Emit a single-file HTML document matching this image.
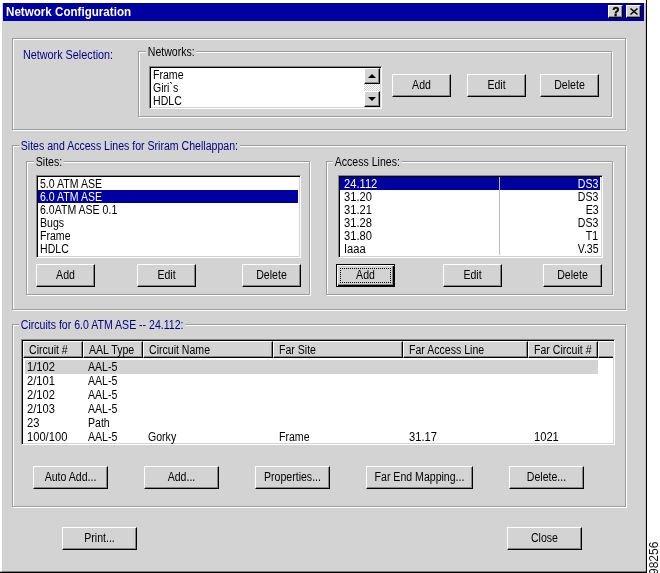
<!DOCTYPE html>
<html><head><meta charset="utf-8"><title>Network Configuration</title>
<style>
html,body{margin:0;padding:0;background:#fff;}
body{width:660px;height:573px;position:relative;overflow:hidden;font-family:"Liberation Sans",sans-serif;font-size:12px;color:#000;}
#win{position:absolute;left:0;top:0;width:647px;height:573px;background:#d3d3d3;box-sizing:border-box;
 box-shadow:inset -1px -1.3px 0 #000, inset 2px 3px 0 #fff, inset -1.4px -1.7px 0 #9a9a9a;}
#win{will-change:transform;}
#win div{position:absolute;box-sizing:border-box;}
#title{left:3px;top:3px;width:641px;height:17.5px;background:#0000a0;}
#ttext{position:absolute;left:3px;top:2px;color:#fff;font-weight:bold;font-size:12px;line-height:14px;white-space:nowrap;transform:scaleX(.967);transform-origin:0 0;}
.cbtn{top:2px;width:15px;height:13px;background:#d3d3d3;border:1px solid;border-color:#fff #000 #000 #fff;box-shadow:inset -1px -1px 0 #888;}
.cbtn svg{position:absolute;left:1px;top:0px}
.grp{border:1px solid #9c9c9c;box-shadow:1px 1px 0 #fff, inset 1px 1px 0 #fff;}
.glabel{background:#d3d3d3;padding:0 2px;line-height:14px;white-space:nowrap;transform:scaleX(0.88);transform-origin:0 0;}
.blue{color:#000086;}
.t{line-height:14px;white-space:nowrap;transform:scaleX(0.88);transform-origin:0 0;}
.btn{background:#d3d3d3;border:1px solid;border-color:#fff #000 #000 #fff;box-shadow:inset -1px -1px 0 #858585;text-align:center;}
.btn .bl{position:absolute;left:0;right:0;top:3px;line-height:14px;white-space:nowrap;transform:scaleX(0.88);}
.btn.def{border-color:#000;box-shadow:inset 1px 1px 0 #fff, inset -1px -1px 0 #000, inset -2px -2px 0 #858585;}
.btn.def .focus{position:absolute;left:3px;top:3px;right:3px;bottom:3px;border:1px dotted #000;}
.sunk{background:#fff;border:1px solid;border-color:#858585 #fff #fff #858585;box-shadow:inset 1px 1px 0 #000, inset -1px -1px 0 #d3d3d3;margin:0;}
.sunk>div{margin:-1px 0 0 -1px}
.li{height:13px;line-height:15px;padding-left:2px;white-space:nowrap;left:2px;right:2px}
.li span{display:inline-block;transform:scaleX(0.88);transform-origin:0 0;}
.li.sel{background:#0000a0;color:#fff;}
.li .r{position:absolute;right:1.5px;top:0;transform-origin:100% 0}
.vline{top:2px;width:1px;height:78px;background:#bdbdbd;}
.sb{background-color:#fff;background-image:conic-gradient(#fff 25%, #d3d3d3 0 50%, #fff 0 75%, #d3d3d3 0);background-size:2px 2px;}
.sbb{left:0;width:16px;height:16px;background:#d3d3d3;border:1px solid;border-color:#fff #000 #000 #fff;box-shadow:inset -1px -1px 0 #858585;}
.sbb svg{position:absolute;left:1px;top:1px}
.hd{top:2px;height:17px;background:#d3d3d3;border:1px solid;border-color:#fff #000 #000 #fff;box-shadow:inset -1px -1px 0 #858585;}
.hd span{position:absolute;left:5px;top:1px;line-height:14px;white-space:nowrap;transform:scaleX(0.88);transform-origin:0 0;}
.hd.last{border-right:none;box-shadow:inset 0 -1px 0 #858585;}
.rowsel{background:#d3d3d3;}
#win .n{transform:scaleX(.93);}
#win .ns{transform:scaleX(.9);}
#fig{will-change:transform;position:absolute;left:648px;top:574.8px;transform-origin:0 0;transform:rotate(-90deg);font-size:12px;line-height:12px;white-space:nowrap;color:#111;}
</style></head>
<body>
<div id="win">
<div id="title"><span id="ttext">Network Configuration</span><div class="cbtn" style="left:605px"><svg width="12" height="11" viewBox="0 0 12 11"><text x="6" y="10" text-anchor="middle" font-family="Liberation Sans, sans-serif" font-weight="bold" font-size="12" fill="#000" stroke="#000" stroke-width=".4">?</text></svg></div><div class="cbtn" style="left:623px"><svg width="12" height="11" viewBox="0 0 12 11"><path d="M2.5 2.5 L9.5 8.5 M9.5 2.5 L2.5 8.5" stroke="#000" stroke-width="1.6" fill="none"/></svg></div></div>
<div class="grp" style="left:12px;top:38px;width:614px;height:92px"></div>
<div class="t blue ns" style="left:23px;top:48px">Network Selection:</div>
<div class="grp" style="left:138px;top:51px;width:474px;height:66px"></div>
<div class="glabel" style="left:146px;top:45px">Networks:</div>
<div class="sunk" style="left:149px;top:66px;width:233px;height:43px"><div class="li" style="top:2px"><span>Frame</span></div><div class="li" style="top:15px"><span>Giri`s</span></div><div class="li" style="top:28px"><span>HDLC</span></div><div class="sb" style="left:215px;top:2px;width:16px;height:39px"><div class="sbb" style="top:0"><svg width="12" height="11" viewBox="0 0 12 11"><path d="M2 8 L10 8 L6 4 Z" fill="#000"/></svg></div><div class="sbb" style="bottom:0"><svg width="12" height="11" viewBox="0 0 12 11"><path d="M2 4 L10 4 L6 8 Z" fill="#000"/></svg></div></div></div>
<div class="btn" style="left:392px;top:74px;width:59px;height:23px;"><span class="bl">Add</span></div>
<div class="btn" style="left:467px;top:74px;width:59px;height:23px;"><span class="bl">Edit</span></div>
<div class="btn" style="left:540px;top:74px;width:59px;height:23px;"><span class="bl">Delete</span></div>
<div class="grp" style="left:12px;top:145px;width:614px;height:165px"></div>
<div class="glabel blue" style="left:19px;top:139px">Sites and Access Lines for Sriram Chellappan:</div>
<div class="grp" style="left:26px;top:161px;width:284px;height:134px"></div>
<div class="glabel" style="left:34px;top:155px">Sites:</div>
<div class="sunk" style="left:36px;top:175px;width:265px;height:83px">
<div class="li" style="top:2px;left:2px;right:2px"><span>5.0 ATM ASE</span></div>
<div class="li sel" style="top:15px;left:2px;right:2px"><span>6.0 ATM ASE</span></div>
<div class="li" style="top:28px;left:2px;right:2px"><span>6.0ATM ASE 0.1</span></div>
<div class="li" style="top:41px;left:2px;right:2px"><span>Bugs</span></div>
<div class="li" style="top:54px;left:2px;right:2px"><span>Frame</span></div>
<div class="li" style="top:67px;left:2px;right:2px"><span>HDLC</span></div>
</div>
<div class="btn" style="left:36px;top:264px;width:59px;height:23px;"><span class="bl">Add</span></div>
<div class="btn" style="left:137px;top:264px;width:59px;height:23px;"><span class="bl">Edit</span></div>
<div class="btn" style="left:242px;top:264px;width:59px;height:23px;"><span class="bl">Delete</span></div>
<div class="grp" style="left:326px;top:161px;width:287px;height:134px"></div>
<div class="glabel" style="left:333px;top:155px">Access Lines:</div>
<div class="sunk" style="left:338px;top:175px;width:265px;height:83px">
<div class="li sel" style="top:2px;left:2px;right:2px;padding-left:4px"><span class="n">24.112</span><span class="r">DS3</span></div>
<div class="li" style="top:15px;left:2px;right:2px;padding-left:4px"><span class="n">31.20</span><span class="r">DS3</span></div>
<div class="li" style="top:28px;left:2px;right:2px;padding-left:4px"><span class="n">31.21</span><span class="r">E3</span></div>
<div class="li" style="top:41px;left:2px;right:2px;padding-left:4px"><span class="n">31.28</span><span class="r">DS3</span></div>
<div class="li" style="top:54px;left:2px;right:2px;padding-left:4px"><span class="n">31.80</span><span class="r">T1</span></div>
<div class="li" style="top:67px;left:2px;right:2px;padding-left:4px"><span class="n">Iaaa</span><span class="r">V.35</span></div>
<div class="vline" style="left:161px"></div>
</div>
<div class="btn def" style="left:336px;top:264px;width:59px;height:23px;"><span class="bl">Add</span><i class="focus"></i></div>
<div class="btn" style="left:443px;top:264px;width:59px;height:23px;"><span class="bl">Edit</span></div>
<div class="btn" style="left:543px;top:264px;width:59px;height:23px;"><span class="bl">Delete</span></div>
<div class="grp" style="left:12px;top:324px;width:614px;height:183px"></div>
<div class="glabel blue" style="left:19px;top:318px">Circuits for 6.0 ATM ASE -- 24.112:</div>
<div class="sunk" style="left:21px;top:339px;width:594px;height:106px">
<div class="hd" style="left:2px;width:60px"><span>Circuit #</span></div>
<div class="hd" style="left:62px;width:60px"><span>AAL Type</span></div>
<div class="hd" style="left:122px;width:130px"><span>Circuit Name</span></div>
<div class="hd" style="left:252px;width:130px"><span>Far Site</span></div>
<div class="hd" style="left:382px;width:125px"><span>Far Access Line</span></div>
<div class="hd" style="left:507px;width:70px"><span>Far Circuit #</span></div>
<div class="hd last" style="left:577px;width:15px"><span></span></div>
<div class="rowsel" style="left:4px;top:21px;width:573px;height:14px"></div>
<div class="t n" style="left:6px;top:21px">1/102</div>
<div class="t" style="left:67px;top:21px">AAL-5</div>
<div class="t n" style="left:6px;top:35px">2/101</div>
<div class="t" style="left:67px;top:35px">AAL-5</div>
<div class="t n" style="left:6px;top:49px">2/102</div>
<div class="t" style="left:67px;top:49px">AAL-5</div>
<div class="t n" style="left:6px;top:63px">2/103</div>
<div class="t" style="left:67px;top:63px">AAL-5</div>
<div class="t n" style="left:6px;top:77px">23</div>
<div class="t" style="left:67px;top:77px">Path</div>
<div class="t n" style="left:6px;top:91px">100/100</div>
<div class="t" style="left:67px;top:91px">AAL-5</div>
<div class="t" style="left:127px;top:91px">Gorky</div>
<div class="t" style="left:258px;top:91px">Frame</div>
<div class="t n" style="left:388px;top:91px">31.17</div>
<div class="t n" style="left:513px;top:91px">1021</div>
</div>
<div class="btn" style="left:33px;top:466px;width:75px;height:23px;"><span class="bl">Auto Add...</span></div>
<div class="btn" style="left:144px;top:466px;width:75px;height:23px;"><span class="bl">Add...</span></div>
<div class="btn" style="left:255px;top:466px;width:75px;height:23px;"><span class="bl">Properties...</span></div>
<div class="btn" style="left:366px;top:466px;width:107px;height:23px;"><span class="bl">Far End Mapping...</span></div>
<div class="btn" style="left:509px;top:466px;width:75px;height:23px;"><span class="bl">Delete...</span></div>
<div class="btn" style="left:62px;top:527px;width:75px;height:23px;"><span class="bl">Print...</span></div>
<div class="btn" style="left:507px;top:527px;width:75px;height:23px;"><span class="bl">Close</span></div>
</div>
<div id="fig">98256</div>
</body></html>
